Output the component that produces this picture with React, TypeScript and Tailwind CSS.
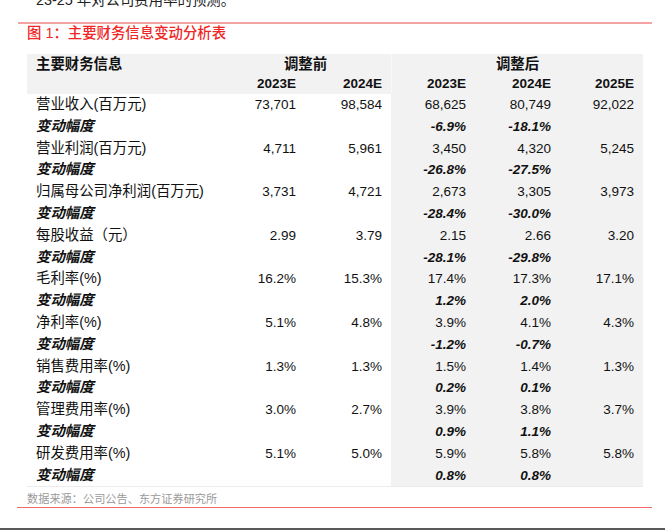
import React from 'react';

type Row = {
  label: string;
  values: string[];
  change?: boolean;
};

const rows: Row[] = [
  { label: '营业收入(百万元)', values: ['73,701', '98,584', '68,625', '80,749', '92,022'] },
  { label: '变动幅度', values: ['', '', '-6.9%', '-18.1%', ''], change: true },
  { label: '营业利润(百万元)', values: ['4,711', '5,961', '3,450', '4,320', '5,245'] },
  { label: '变动幅度', values: ['', '', '-26.8%', '-27.5%', ''], change: true },
  { label: '归属母公司净利润(百万元)', values: ['3,731', '4,721', '2,673', '3,305', '3,973'] },
  { label: '变动幅度', values: ['', '', '-28.4%', '-30.0%', ''], change: true },
  { label: '每股收益（元）', values: ['2.99', '3.79', '2.15', '2.66', '3.20'] },
  { label: '变动幅度', values: ['', '', '-28.1%', '-29.8%', ''], change: true },
  { label: '毛利率(%)', values: ['16.2%', '15.3%', '17.4%', '17.3%', '17.1%'] },
  { label: '变动幅度', values: ['', '', '1.2%', '2.0%', ''], change: true },
  { label: '净利率(%)', values: ['5.1%', '4.8%', '3.9%', '4.1%', '4.3%'] },
  { label: '变动幅度', values: ['', '', '-1.2%', '-0.7%', ''], change: true },
  { label: '销售费用率(%)', values: ['1.3%', '1.3%', '1.5%', '1.4%', '1.3%'] },
  { label: '变动幅度', values: ['', '', '0.2%', '0.1%', ''], change: true },
  { label: '管理费用率(%)', values: ['3.0%', '2.7%', '3.9%', '3.8%', '3.7%'] },
  { label: '变动幅度', values: ['', '', '0.9%', '1.1%', ''], change: true },
  { label: '研发费用率(%)', values: ['5.1%', '5.0%', '5.9%', '5.8%', '5.8%'] },
  { label: '变动幅度', values: ['', '', '0.8%', '0.8%', ''], change: true },
];

const grid = 'grid grid-cols-[193px_85px_86px_84px_85px_83px]';

const FinanceTable: React.FC = () => (
  <div className="ml-[27px] w-[616px] text-[13.5px] text-[#111]">
    {/* header */}
    <div className={`${grid} bg-[#f2f2f2] font-bold`}>
      <div className="h-[20px] pl-[9px] text-[14.4px] leading-[20px]">主要财务信息</div>
      <div className="col-span-2 h-[20px] text-center text-[14.4px] leading-[20px]">调整前</div>
      <div className="col-span-3 h-[20px] border-l border-[#f8f8f8] text-center text-[14.4px] leading-[20px]">调整后</div>
      <div className="h-[20px]"></div>
      <div className="h-[20px] pr-[9px] text-right leading-[20px]">2023E</div>
      <div className="h-[20px] pr-[9px] text-right leading-[20px]">2024E</div>
      <div className="h-[20px] border-l border-[#f8f8f8] pr-[9px] text-right leading-[20px]">2023E</div>
      <div className="h-[20px] pr-[9px] text-right leading-[20px]">2024E</div>
      <div className="h-[20px] pr-[9px] text-right leading-[20px]">2025E</div>
    </div>

    {/* body */}
    <div className="border-b border-[#ececec]">
      {rows.map((r, i) => (
        <div key={i} className={`${grid} h-[21.8px] leading-[21.8px]`}>
          <div className={`pl-[9px] text-[14.4px] ${r.change ? 'font-bold italic' : ''}`}>{r.label}</div>
          {r.values.map((v, j) => (
            <div
              key={j}
              className={`pr-[9px] text-right ${j >= 2 ? 'bg-[#f2f2f2]' : ''} ${r.change ? 'font-bold italic' : ''}`}
            >
              {v}
            </div>
          ))}
        </div>
      ))}
    </div>
  </div>
);

export default function App() {
  return (
    <div className="relative h-[532px] w-[665px] overflow-hidden bg-white font-['Liberation_Sans','Noto_Sans_CJK_SC',sans-serif]">
      <div className="-mt-[9px] pl-[36px] text-[14.4px] leading-[18px] text-[#222]">23-25 年对公司费用率的预测。</div>

      <div className="ml-[18px] mt-[13px] h-[2px] w-[634px] bg-[#f4a3a3]"></div>

      <div className="pl-[27px] text-[14.4px] font-medium leading-[19px] text-[#f02626]">图 1：主要财务信息变动分析表</div>

      <div className="mt-[11px]">
        <FinanceTable />
      </div>

      <div className="pl-[27px] pt-[4px] text-[11.2px] leading-[16px] text-[#9a9a9a]">数据来源：公司公告、东方证券研究所</div>

      <div className="ml-[17px] h-[1px] w-[635px] bg-[#f06a6a]"></div>

      <div className="mt-[20px] h-[2px] w-full bg-[#5a5a5a]"></div>
    </div>
  );
}
